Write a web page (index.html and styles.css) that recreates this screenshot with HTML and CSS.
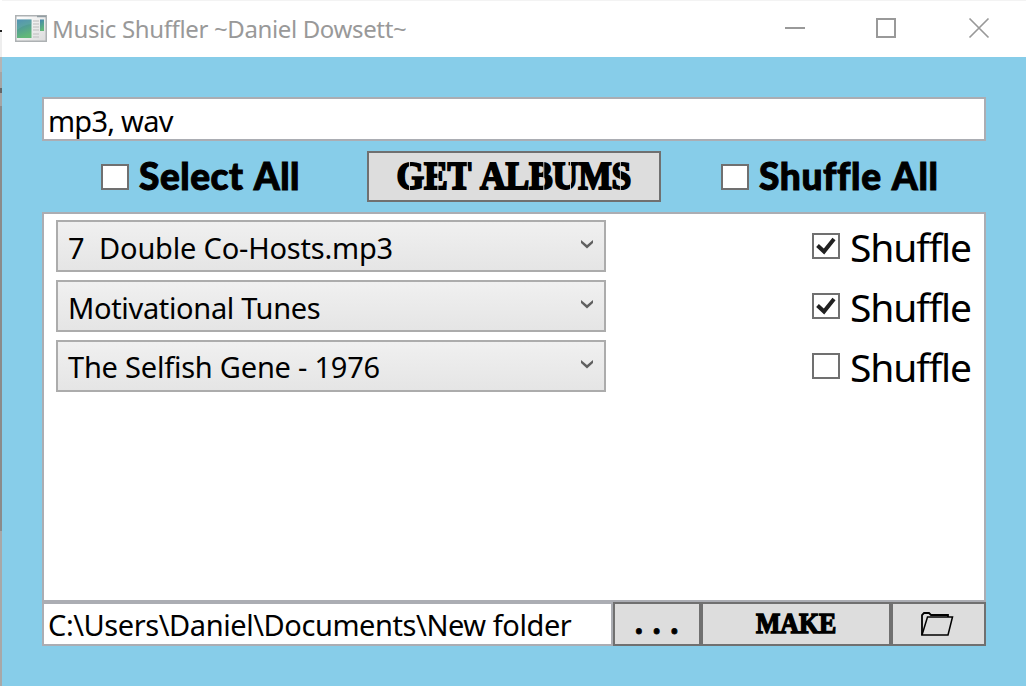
FILE: index.html
```
<!DOCTYPE html>
<html lang="en">
<head>
<meta charset="utf-8">
<title>Music Shuffler</title>
<link rel="stylesheet" href="styles.css">
</head>
<body>
<div class="window">
  <header class="titlebar">
    <svg class="app-icon" width="32" height="27" viewBox="0 0 32 27">
      <defs>
        <linearGradient id="pane" x1="0" y1="0" x2="0.3" y2="1"><stop offset="0" stop-color="#4384b0"/><stop offset="1" stop-color="#62b878"/></linearGradient>
        <linearGradient id="frame" x1="0" y1="0" x2="1" y2="1"><stop offset="0" stop-color="#fff"/><stop offset="1" stop-color="#dcdcdc"/></linearGradient>
      </defs>
      <rect x="0.75" y="0.75" width="30.5" height="25.5" fill="url(#frame)" stroke="#adb1b3" stroke-width="1.5"/>
      <path d="M22 1.5h9" stroke="#929da3" stroke-width="1.5"/>
      <rect x="2" y="4.5" width="14.5" height="18.5" fill="url(#pane)"/>
      <path d="M2 15Q8 10 16.5 9V4.500H2Z" fill="#78b7bd" opacity=".3"/>
      <path d="M18 6h6M18 9h6M18 12h6M18 15h6M18 19h6M18 22h6" stroke="#cbcbcb" stroke-width="1.3"/>
      <rect x="25" y="4.500" width="4" height="11.500" fill="url(#pane)"/>
    </svg>
    <span class="title">Music Shuffler ~Daniel Dowsett~</span>
    <svg class="controls" width="206" height="24" viewBox="0 0 206 24" fill="none" stroke="#999" stroke-width="2">
      <path d="M0 12h20M92 3h18v18H92z"/><path d="M184.500 2.500l19 19m0-19l-19 19" stroke-width="1.700"/>
    </svg>
  </header>
  <main class="content">
    <div class="field filter"><span class="t-filter">mp3, wav</span></div>
    <div class="toolbar">
      <label class="check"><span class="box"></span><span class="display t-select">Select All</span></label>
      <button class="btn get"><span class="stencil t-get">GET ALBUMS</span></button>
      <label class="check"><span class="box"></span><span class="display t-all">Shuffle All</span></label>
    </div>
    <div class="list">
      <div class="row">
        <div class="combo"><span class="t-row1">7&nbsp; Double Co-Hosts.mp3</span><svg class="chevron" width="12" height="9" viewBox="0 0 12 9"><path d="M0 0l6 5 6-5v3L6 8.500 0 3z" fill="#606060"/></svg></div>
        <label class="check"><span class="box"><svg width="20" height="18" viewBox="0 0 20 18"><path d="M1.500 8.500L8 14.500 18 2" fill="none" stroke="#212121" stroke-width="4"/></svg></span><span class="t-shuffle">Shuffle</span></label>
      </div>
      <div class="row">
        <div class="combo"><span class="t-row2">Motivational Tunes</span><svg class="chevron" width="12" height="9" viewBox="0 0 12 9"><path d="M0 0l6 5 6-5v3L6 8.500 0 3z" fill="#606060"/></svg></div>
        <label class="check"><span class="box"><svg width="20" height="18" viewBox="0 0 20 18"><path d="M1.500 8.500L8 14.500 18 2" fill="none" stroke="#212121" stroke-width="4"/></svg></span><span class="t-shuffle">Shuffle</span></label>
      </div>
      <div class="row">
        <div class="combo"><span class="t-row3">The Selfish Gene - 1976</span><svg class="chevron" width="12" height="9" viewBox="0 0 12 9"><path d="M0 0l6 5 6-5v3L6 8.500 0 3z" fill="#606060"/></svg></div>
        <label class="check"><span class="box"></span><span class="t-shuffle">Shuffle</span></label>
      </div>
    </div>
    <div class="footer">
      <div class="field path"><span class="t-path">C:\Users\Daniel\Documents\New folder</span></div>
      <button class="btn browse"><span class="t-dots">...</span></button>
      <button class="btn make"><span class="stencil t-make">MAKE</span></button>
      <button class="btn open"><svg width="34" height="26" viewBox="0 0 34 26" fill="none" stroke="#000" stroke-width="1.800"><path d="M2 24V4l2-2h5l2 2h17v2"/><path d="M2 24L7.500 6H32.500l-4.500 18z" stroke-width="1.500"/></svg></button>
    </div>
  </main>
</div>
</body>
</html>
```
FILE: styles.css
```
* { box-sizing: border-box; }
body { margin: 0; width: 1026px; height: 686px; overflow: hidden; font-family: "Noto Sans", "Open Sans", sans-serif; color: #000;
  background: linear-gradient(#fff 0 30px, #222 30px 32px, #eee 32px 57px, #b4b4b4 57px 72px, #a5a5a5 72px 88px, #666 88px 93px, #a5a5a5 93px 106px, #8b8b8b 106px 531px, #a8a8a8 531px); }
.window { margin-left: 2px; height: 686px; background: #87cde9; display: flex; flex-direction: column; }
.titlebar { height: 57px; background: #fff; border-top: 1px solid #f3f3f3; display: flex; align-items: center; padding: 0 35px 2px 13px; }
.title { font-size: 24px; color: #999; margin-left: 5px; letter-spacing: -.36px; white-space: nowrap; padding-top: 1px; }
.controls { margin-left: auto; }
.content { margin: 40px 40px 0; display: flex; flex-direction: column; }
.field { height: 44px; background: #fff; border: 2px solid #abadb3; padding-left: 4px; line-height: 43px; font-size: 29px; white-space: nowrap; }
.t-filter { letter-spacing: -.75px; }
.t-path { letter-spacing: -.43px; }
.path { line-height: 42px; }
.toolbar { height: 71px; display: grid; grid-template-columns: 325px 294px 325px; align-items: center; }
.toolbar .check { padding-left: 59px; }
.toolbar .check:last-child { padding-left: 60px; }
.check { display: flex; align-items: center; white-space: nowrap; }
.box { width: 28px; height: 26px; border: 2px solid #707070; background: #fff; display: flex; align-items: center; justify-content: center; flex: none; }
.box svg { display: block; }
.btn { margin: 0; padding: 0; background: #ddd; border: 2px solid #707070; color: #000; font: inherit; display: flex; align-items: center; justify-content: center; }
.get { height: 51px; }
.display { font: 900 37px/42px Lato, sans-serif; margin-left: 10px; padding-bottom: 2px; -webkit-text-stroke: 1px #000; word-spacing: 2px; }
.t-select { letter-spacing: .55px; }
.t-all { letter-spacing: .65px; }

/* Stencil lettering: heavy serif with narrow bridges cut through the letters */
.stencil { position: relative; font-family: "Liberation Serif", serif; font-weight: 700; -webkit-text-stroke: 2px #000; white-space: nowrap; transform: scaleX(.89); }
.t-get::after { content: ""; position: absolute; inset: 0; background-repeat: no-repeat; background-size: 1.2px 100%; background-image:
  linear-gradient(#ddd, #ddd), linear-gradient(#ddd, #ddd), linear-gradient(#ddd, #ddd), linear-gradient(#ddd, #ddd), linear-gradient(#ddd, #ddd), linear-gradient(#ddd, #ddd); }
.t-get { font-size: 40px; line-height: 44px; padding-bottom: 2px; word-spacing: 3px; letter-spacing: -.2px; }
.t-get::after { background-position: 14px 0, 46px 0, 79px 0, 165px 0, 195px 0, 251px 0; }
.t-make { font-size: 29px; line-height: 38px; padding-bottom: 2px; -webkit-text-stroke-width: 1.5px; }

.list { height: 390px; background: #fff; border: 2px solid #abadb3; padding: 6px 12px; display: flex; flex-direction: column; gap: 8px; }
.row { height: 52px; display: flex; justify-content: space-between; }
.combo { width: 550px; border: 2px solid #acacac; background: linear-gradient(#f0f0f0, #e5e5e5); display: flex; justify-content: space-between; align-items: center; padding: 0 11px 0 10px; font-size: 29px; line-height: 48px; white-space: nowrap; }
.combo span { padding-top: 3px; }
.combo .t-row3 { padding-top: 1px; }
.chevron { margin: 0 0 3px 0; }
.t-row1 { letter-spacing: -.2px; }
.t-row2 { letter-spacing: -.33px; }
.t-row3 { letter-spacing: -.22px; }
.row .check { width: 160px; font-size: 39px; line-height: 50px; }
.row .t-shuffle { margin-left: 10px; padding-top: 2px; letter-spacing: -1.1px; }
.footer { height: 44px; display: grid; grid-template-columns: 571px 88px 190px 95px; grid-template-rows: 44px; }
.t-dots { font-size: 42px; line-height: 26px; letter-spacing: 6.5px; padding: 0 0 12px 6px; -webkit-text-stroke: .8px #000; }
.open svg { margin-right: 3px; }
```
